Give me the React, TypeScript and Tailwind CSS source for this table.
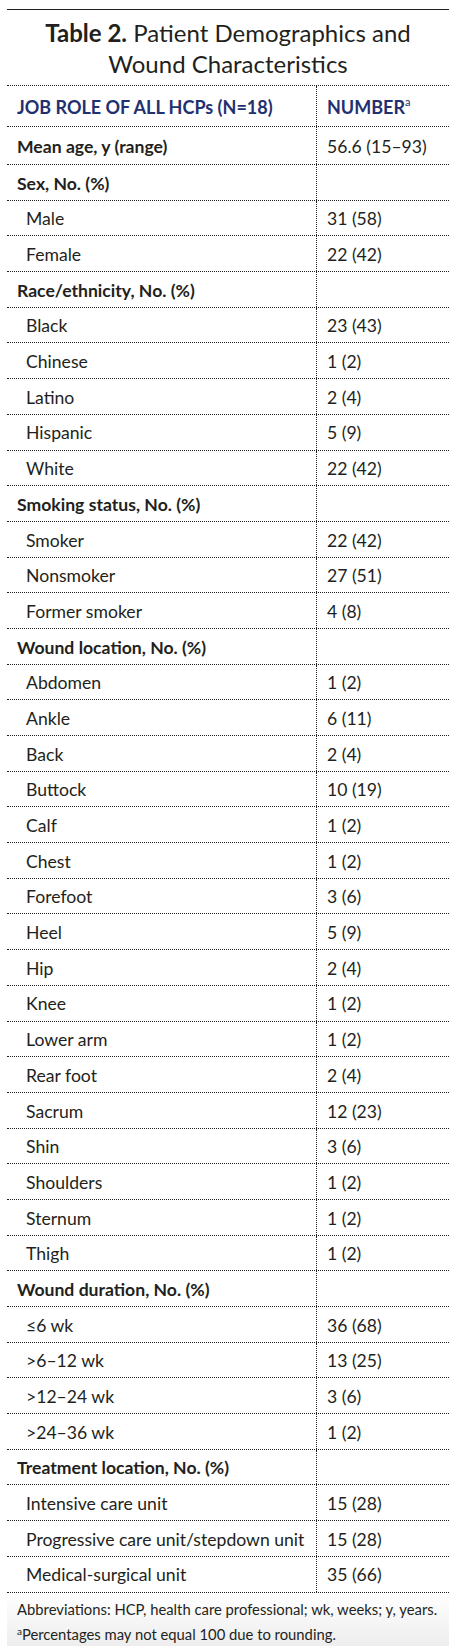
const rows: { label: string; value?: string; head?: boolean }[] = [
  { label: "Mean age, y (range)", value: "56.6 (15–93)", head: true },
  { label: "Sex, No. (%)", head: true },
  { label: "Male", value: "31 (58)" },
  { label: "Female", value: "22 (42)" },
  { label: "Race/ethnicity, No. (%)", head: true },
  { label: "Black", value: "23 (43)" },
  { label: "Chinese", value: "1 (2)" },
  { label: "Latino", value: "2 (4)" },
  { label: "Hispanic", value: "5 (9)" },
  { label: "White", value: "22 (42)" },
  { label: "Smoking status, No. (%)", head: true },
  { label: "Smoker", value: "22 (42)" },
  { label: "Nonsmoker", value: "27 (51)" },
  { label: "Former smoker", value: "4 (8)" },
  { label: "Wound location, No. (%)", head: true },
  { label: "Abdomen", value: "1 (2)" },
  { label: "Ankle", value: "6 (11)" },
  { label: "Back", value: "2 (4)" },
  { label: "Buttock", value: "10 (19)" },
  { label: "Calf", value: "1 (2)" },
  { label: "Chest", value: "1 (2)" },
  { label: "Forefoot", value: "3 (6)" },
  { label: "Heel", value: "5 (9)" },
  { label: "Hip", value: "2 (4)" },
  { label: "Knee", value: "1 (2)" },
  { label: "Lower arm", value: "1 (2)" },
  { label: "Rear foot", value: "2 (4)" },
  { label: "Sacrum", value: "12 (23)" },
  { label: "Shin", value: "3 (6)" },
  { label: "Shoulders", value: "1 (2)" },
  { label: "Sternum", value: "1 (2)" },
  { label: "Thigh", value: "1 (2)" },
  { label: "Wound duration, No. (%)", head: true },
  { label: "≤6 wk", value: "36 (68)" },
  { label: ">6–12 wk", value: "13 (25)" },
  { label: ">12–24 wk", value: "3 (6)" },
  { label: ">24–36 wk", value: "1 (2)" },
  { label: "Treatment location, No. (%)", head: true },
  { label: "Intensive care unit", value: "15 (28)" },
  { label: "Progressive care unit/stepdown unit", value: "15 (28)" },
  { label: "Medical-surgical unit", value: "35 (66)" },
];

export default function App() {
  return (
    <div className="min-h-[1646px] bg-white pl-[7px] pr-[13px] pt-[9px] font-['Lato',sans-serif] text-[#231f20]">
      <div className="border-t-[1.5px] border-[#231f20]">
        {/* Title */}
        <h1 className="pt-[7px] pb-[6px] text-center text-[24px] leading-[31px]">
          <span className="font-bold">Table 2.</span> Patient Demographics and
          <br />
          Wound Characteristics
        </h1>

        {/* Header */}
        <div className="flex h-[42px] border-y border-dotted border-[#231f20]">
          <div className="flex w-[310px] items-center border-r border-dotted border-[#231f20] pl-[10px] pt-[2px] text-[18px] font-bold text-[#22306f]">
            JOB ROLE OF ALL HCPs (N=18)
          </div>
          <div className="flex flex-1 items-center pl-[10px] pt-[2px] text-[18px] font-bold text-[#22306f]">
            NUMBER<sup className="text-[11px] font-normal">a</sup>
          </div>
        </div>

        {/* Body rows */}
        {rows.map((r, i) => (
          <div
            key={r.label}
            className={`flex border-b border-dotted border-[#231f20] text-[17.6px] ${
              i === 0 ? "h-[38px]" : "h-[35.7px]"
            }`}
          >
            <div
              className={`flex w-[310px] items-center border-r border-dotted border-[#231f20] pt-[3px] ${
                r.head ? "pl-[10px] font-bold" : "pl-[19px]"
              }`}
            >
              {r.label}
            </div>
            <div className="flex flex-1 items-center pl-[10px] pt-[3px]">
              {r.value}
            </div>
          </div>
        ))}

        {/* Footnotes */}
        <div className="border-b-[1.5px] border-[#231f20] bg-gradient-to-b from-white to-[#ececec] px-[10px] pt-[4px] pb-[4px] text-[14.8px] leading-[25px]">
          <p className="whitespace-nowrap">Abbreviations: HCP, health care professional; wk, weeks; y, years.</p>
          <p>
            <sup className="text-[10px]">a</sup>Percentages may not equal 100 due to rounding.
          </p>
        </div>
      </div>
    </div>
  );
}
